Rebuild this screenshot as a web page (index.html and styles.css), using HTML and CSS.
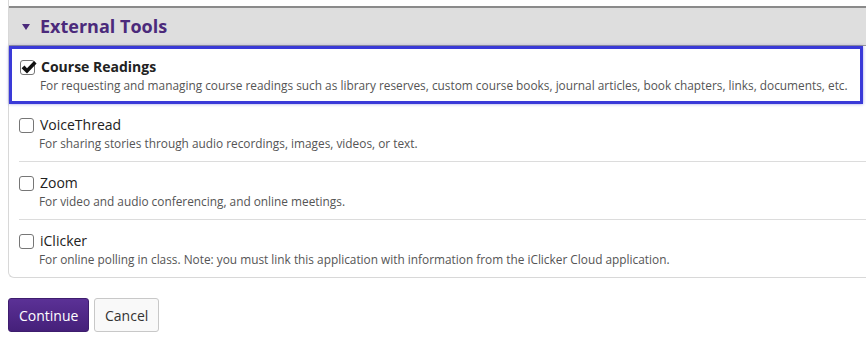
FILE: index.html
```html
<!DOCTYPE html>
<html lang="en">
<head>
<meta charset="utf-8">
<title>External Tools</title>
<link rel="stylesheet" href="styles.css">
</head>
<body>
<div class="panel">
  <div class="panel-head">
    <span class="caret"></span>
    <h2 class="title">External Tools</h2>
  </div>
  <ul class="tools">
    <li class="tool tool-focus">
      <label class="tool-label">
        <span class="box">
          <input type="checkbox" class="check" checked>
          <svg class="tick" viewBox="0 0 16 16" width="17" height="17" aria-hidden="true"><path d="M1.5 8.6 L4.2 6.2 L6.6 8.7 L13.2 1.8 L15.6 4.2 L6.6 13.6 Z" fill="#111"/></svg>
        </span>
        <span class="name name-bold">Course Readings</span>
      </label>
      <div class="desc">For requesting and managing course readings such as library reserves, custom course books, journal articles, book chapters, links, documents, etc.</div>
    </li>
    <li class="tool">
      <label class="tool-label">
        <span class="box"><input type="checkbox" class="check"></span>
        <span class="name">VoiceThread</span>
      </label>
      <div class="desc">For sharing stories through audio recordings, images, videos, or text.</div>
    </li>
    <li class="tool">
      <label class="tool-label">
        <span class="box"><input type="checkbox" class="check"></span>
        <span class="name">Zoom</span>
      </label>
      <div class="desc">For video and audio conferencing, and online meetings.</div>
    </li>
    <li class="tool tool-last">
      <label class="tool-label">
        <span class="box"><input type="checkbox" class="check"></span>
        <span class="name">iClicker</span>
      </label>
      <div class="desc">For online polling in class. Note: you must link this application with information from the iClicker Cloud application.</div>
    </li>
  </ul>
</div>
<div class="actions">
  <button class="btn btn-primary">Continue</button>
  <button class="btn btn-default">Cancel</button>
</div>
</body>
</html>
```
FILE: styles.css
```css
html, body {
  margin: 0;
  padding: 0;
  background: #fff;
  overflow: hidden;
}
body {
  font-family: "Open Sans", "Liberation Sans", sans-serif;
  color: #333;
  width: 866px;
  height: 343px;
}
.panel {
  margin-left: 8px;
  width: 880px;
  border-left: 1px solid #d8d8d8;
  border-bottom: 1px solid #d8d8d8;
  border-bottom-left-radius: 6px;
  padding-top: 6px;
}
.panel-head {
  display: flex;
  align-items: center;
  height: 37px;
  background: #dedede;
  border-top: 2px solid #8a8a8a;
  border-bottom: 1px solid #9a9a9a;
  padding-left: 13px;
}
.caret {
  width: 0;
  height: 0;
  border-left: 4px solid transparent;
  border-right: 4px solid transparent;
  border-top: 6px solid #4b2a7b;
  margin-right: 10px;
  margin-top: 1px;
}
.title {
  margin: 0 0 1px 0;
  font-size: 18px;
  font-weight: 700;
  color: #4b2a7b;
  line-height: 24px;
}
.tools {
  list-style: none;
  margin: 0;
  padding: 0;
}
.tool {
  margin-left: 10px;
  padding: 11px 0 9px 0;
  height: 37px;
  border-bottom: 1px solid #dcdcdc;
}
.tool-last {
  border-bottom: none;
}
.tool-focus {
  margin-left: 0;
  width: 840px;
  height: 37px;
  padding: 8px 0 7px 8px;
  border: 3px solid #3a3ad8;
  box-shadow: 0 0 3px rgba(40, 40, 200, 0.45);
}
.tool-label {
  display: flex;
  align-items: center;
  height: 20px;
  line-height: 20px;
}
.box {
  position: relative;
  width: 15px;
  height: 15px;
  margin-right: 6px;
  flex: none;
}
.check {
  appearance: none;
  -webkit-appearance: none;
  display: block;
  width: 15px;
  height: 15px;
  margin: 0;
  border: 1px solid #767676;
  border-radius: 3px;
  background: #fff;
  box-sizing: border-box;
}
.tick {
  position: absolute;
  left: 0;
  top: -1px;
}
.name {
  font-size: 14px;
  color: #222;
}
.name-bold {
  font-weight: 700;
}
.desc {
  padding-left: 20px;
  font-size: 11.85px;
  line-height: 17px;
  color: #555;
  white-space: nowrap;
}
.actions {
  display: flex;
  gap: 5px;
  margin: 20px 0 0 8px;
}
.btn {
  font-family: "Open Sans", "Liberation Sans", sans-serif;
  font-size: 14px;
  height: 34px;
  border-radius: 3px;
  padding: 0 10px;
  cursor: pointer;
}
.btn-primary {
  width: 81px;
  color: #fff;
  background: linear-gradient(#5b3196, #45207a);
  border: 1px solid #3e1d6e;
}
.btn-default {
  width: 65px;
  color: #333;
  background: #f9f9f9;
  border: 1px solid #c8c8c8;
}
```
